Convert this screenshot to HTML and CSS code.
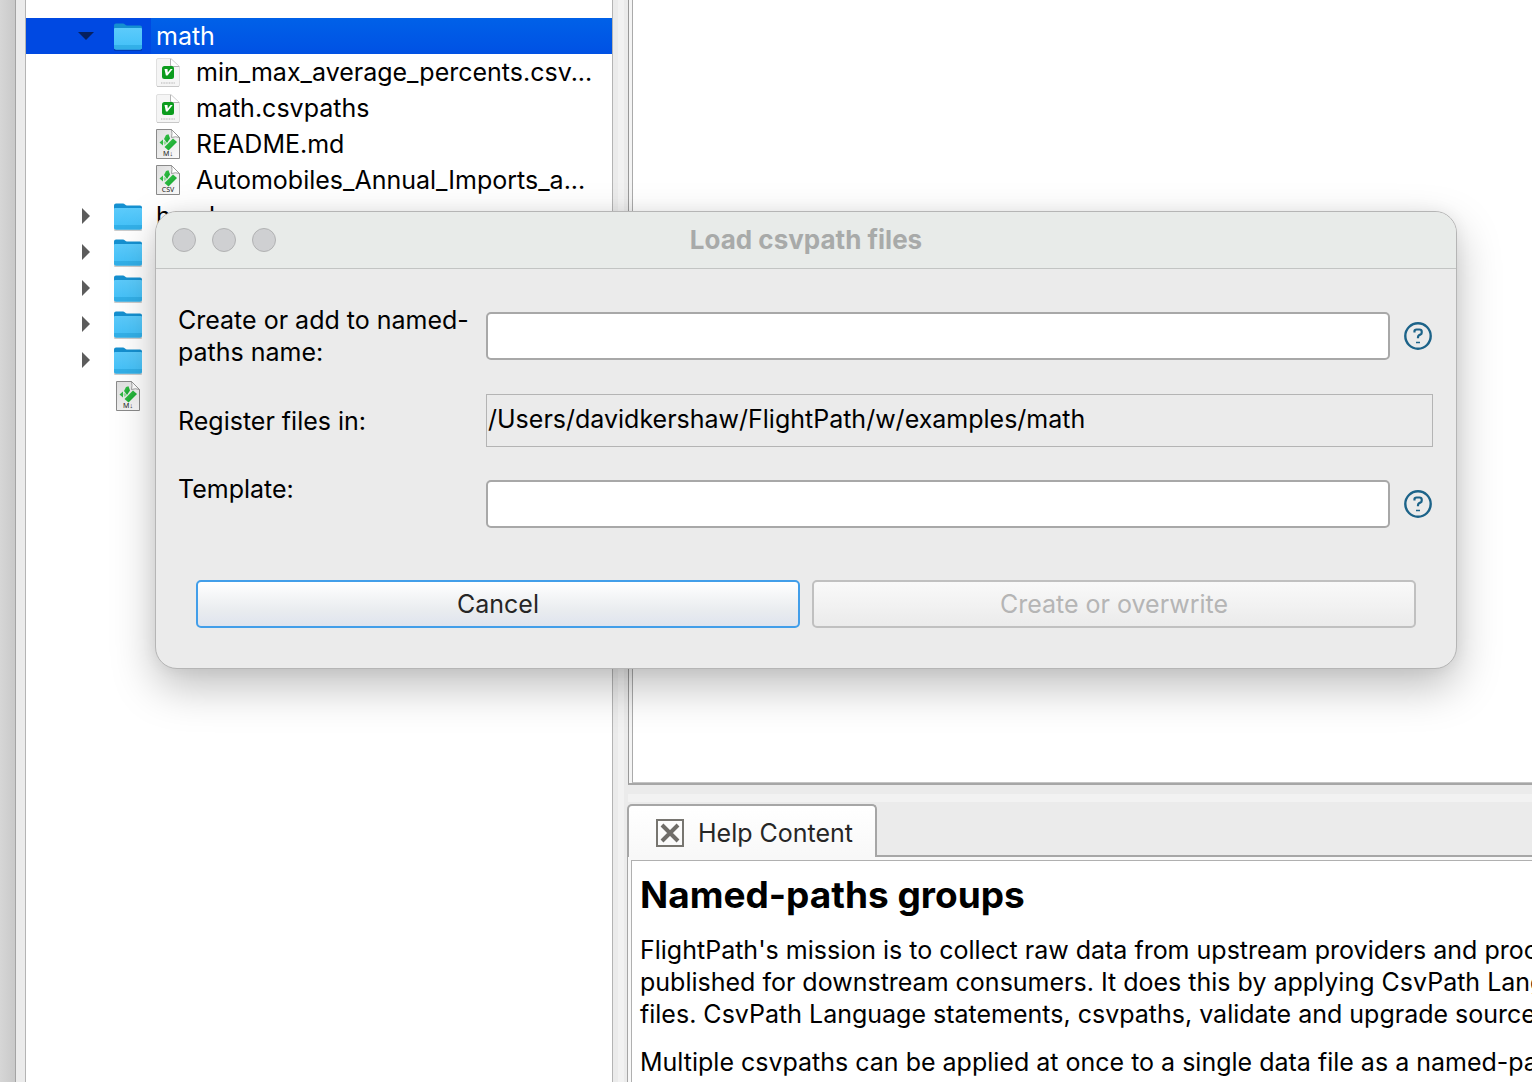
FILE: index.html
```html
<!DOCTYPE html>
<html lang="en">
<head>
  <meta charset="UTF-8">
  <meta name="viewport" content="width=device-width, initial-scale=1.0">
  <title>FlightPath</title>
  <link rel="stylesheet" href="styles.css">
</head>
<body>

  <svg class="sprite" aria-hidden="true">
    <defs>
      <linearGradient id="folder-front" x1="0" y1="0" x2="0" y2="1">
        <stop offset="0" stop-color="#5ccbfb"/>
        <stop offset="1" stop-color="#41c0f8"/>
      </linearGradient>
      <linearGradient id="page" x1="0" y1="0" x2="1" y2="1">
        <stop offset="0" stop-color="#dedede"/>
        <stop offset="1" stop-color="#fbfbfb"/>
      </linearGradient>
      <linearGradient id="leaf" x1="0" y1="0" x2="1" y2="1">
        <stop offset="0" stop-color="#3cc44c"/>
        <stop offset="1" stop-color="#0fa32a"/>
      </linearGradient>
    </defs>
    <symbol id="folder" viewBox="0 0 32 32">
      <rect x="2" y="28" width="28" height="3" rx="1" fill="#000" opacity=".2"/>
      <path d="M2 5.500q0-2 2-2h7q1 0 2 1t2 1h13q2 0 2 2v6H2z" fill="#1590d0"/>
      <path d="M2 9q0-1 1-1h26q1 0 1 1v18.500q0 2-2 2H4q-2 0-2-2z" fill="url(#folder-front)"/>
      <path d="M2 26h28" stroke="#219fd8"/>
      <path d="M2 27v.5q0 2 2 2h24q2 0 2-2V27z" fill="#32afe8"/>
    </symbol>
    <symbol id="vim-file" viewBox="0 0 32 32">
      <path d="M6 2.500h13l8.500 8V29q0 1.500-1.500 1.500H6Q4.500 30.500 4.500 29V4Q4.500 2.500 6 2.500z" fill="#f5f5f5" stroke="#e0e0e0"/>
      <path d="M18.500 2.500l9 8h-7.500q-1.500 0-1.500-1.500z" fill="#fff" stroke="#d0d0d0" stroke-width=".7"/>
      <path d="M18.500 3v6q0 1.500 1.500 1.500h7" fill="none" stroke="#b4b4b4"/>
      <path d="M5 30.500h22" stroke="#c8c8c8"/>
      <rect x="10" y="10" width="12" height="13" rx="2.500" fill="#0b9c1d"/>
      <path d="M12.500 13h3l.3 3.500 2.700-3.500h2.200l-5.200 6.500h-1.600z" fill="#fff"/>
      <path d="M9 27h14" stroke="#c8c8c8" stroke-width="1.500" stroke-dasharray="1 .6"/>
    </symbol>
    <symbol id="doc" viewBox="0 0 32 32">
      <path d="M4.500 1.500h15l8 8v21h-23z" fill="url(#page)" stroke="#8a8a8a"/>
      <path d="M19.500 1.500q1 4 0 8 4-1.500 8 0z" fill="#fff" stroke="#8a8a8a" stroke-width=".8"/>
      <path d="M12 11l2-4 2.500-.8L18 10.500l-3 4.500z" fill="url(#leaf)"/>
      <path d="M7.500 14.500l3.500-3v6z" fill="#2fb944"/>
      <path d="M11.500 14l1.500-1 1.500 2.500-2 1.500z" fill="#8fdd98"/>
      <path d="M21 10.500l4 3.500-8.500 8.500-4-3.500z" fill="url(#leaf)"/>
    </symbol>
    <symbol id="md-file" viewBox="0 0 32 32">
      <use href="#doc"/>
      <text class="doc-type" x="16" y="28" text-anchor="middle">M↓</text>
    </symbol>
    <symbol id="csv-file" viewBox="0 0 32 32">
      <use href="#doc"/>
      <text class="doc-type" x="16" y="28" text-anchor="middle">CSV</text>
    </symbol>
    <symbol id="help" viewBox="0 0 28 28">
      <circle cx="14" cy="14" r="12.700" fill="none" stroke="#1c6389" stroke-width="2.400"/>
      <path d="M10.500 10.500V9q0-1.500 2-1.500h3q2.200 0 2.200 2v1.200q0 1.200-1.200 1.800l-1.500.8q-1 .6-1 2v1" fill="none" stroke="#1c6389" stroke-width="2.200"/>
      <path d="M12 20.500h4" stroke="#1c6389" stroke-width="1.500"/>
    </symbol>
  </svg>

  <div class="window">
    <nav class="tree-panel">
      <ul class="tree">
        <li class="row level-1 selected"><span class="arrow open"></span><svg class="icon"><use href="#folder"/></svg><span class="name">math</span></li>
        <li class="row level-2"><svg class="icon"><use href="#vim-file"/></svg><span class="name">min_max_average_percents.csv...</span></li>
        <li class="row level-2"><svg class="icon"><use href="#vim-file"/></svg><span class="name">math.csvpaths</span></li>
        <li class="row level-2"><svg class="icon"><use href="#md-file"/></svg><span class="name">README.md</span></li>
        <li class="row level-2"><svg class="icon"><use href="#csv-file"/></svg><span class="name">Automobiles_Annual_Imports_a...</span></li>
        <li class="row level-1"><span class="arrow"></span><svg class="icon"><use href="#folder"/></svg><span class="name">headers</span></li>
        <li class="row level-1"><span class="arrow"></span><svg class="icon"><use href="#folder"/></svg></li>
        <li class="row level-1"><span class="arrow"></span><svg class="icon"><use href="#folder"/></svg></li>
        <li class="row level-1"><span class="arrow"></span><svg class="icon"><use href="#folder"/></svg></li>
        <li class="row level-1"><span class="arrow"></span><svg class="icon"><use href="#folder"/></svg></li>
        <li class="row level-1"><span class="arrow none"></span><svg class="icon"><use href="#md-file"/></svg></li>
      </ul>
    </nav>

    <div class="splitter"></div>

    <main class="main">
      <div class="editor"><div class="editor-inner"></div></div>
      <div class="splitter-h"></div>
      <section class="help-panel">
        <div class="tabs">
          <div class="tab">
            <button class="tab-close" aria-label="Close tab">
              <svg viewBox="0 0 28 28">
                <rect x="1" y="1" width="26" height="26" fill="none" stroke="#777570" stroke-width="2"/>
                <path d="M6 6l16 16M22 6L6 22" stroke="#6f6d69" stroke-width="4"/>
              </svg>
            </button>
            <span>Help Content</span>
          </div>
        </div>
        <div class="help-frame">
          <article class="help-content">
            <h1>Named-paths groups</h1>
            <p>FlightPath's mission is to collect raw data from upstream providers and process<br>
              published for downstream consumers. It does this by applying CsvPath Language<br>
              files. CsvPath Language statements, csvpaths, validate and upgrade source</p>
            <p>Multiple csvpaths can be applied at once to a single data file as a named-paths</p>
          </article>
        </div>
      </section>
    </main>
  </div>

  <div class="dialog" role="dialog" aria-labelledby="dialog-title">
    <header class="titlebar">
      <div class="lights"><span></span><span></span><span></span></div>
      <h2 id="dialog-title">Load csvpath files</h2>
    </header>
    <form class="form">
      <div class="field">
        <label for="paths-name">Create or add to named-paths name:</label>
        <input class="text" type="text" id="paths-name">
        <button type="button" class="help" aria-label="Help on name"><svg><use href="#help"/></svg></button>
      </div>
      <div class="field">
        <label for="register">Register files in:</label>
        <input class="path" type="text" id="register" value="/Users/davidkershaw/FlightPath/w/examples/math" readonly>
      </div>
      <div class="field last">
        <label for="template">Template:</label>
        <input class="text" type="text" id="template">
        <button type="button" class="help" aria-label="Help on template"><svg><use href="#help"/></svg></button>
      </div>
      <div class="actions">
        <button type="button" class="btn default">Cancel</button>
        <button type="button" class="btn" disabled>Create or overwrite</button>
      </div>
    </form>
  </div>

</body>
</html>
```
FILE: styles.css
```css
* {
  box-sizing: border-box;
}

body {
  margin: 0;
  height: 100vh;
  overflow: hidden;
  background: #ebebeb;
  color: #000;
  font-family: Inter, "Liberation Sans", sans-serif;
  font-size: 25px;
  line-height: 32px;
}

button, input {
  font: inherit;
  color: inherit;
}

.sprite {
  position: absolute;
  width: 0;
  height: 0;
}

.doc-type {
  font-family: "Noto Sans", sans-serif;
  font-size: 7px;
  fill: #222;
}

.window {
  display: flex;
  height: 100%;
  padding-left: 25px;
  background: linear-gradient(to right, #d6d6d6, #c9c9c9 15px, #a4a4a4 15px, #a4a4a4 16px, #ebebeb 16px);
}

/* file tree */
.tree-panel {
  flex: 0 0 588px;
  background: #fff;
  border: solid #b4b4b4;
  border-width: 0 1px;
}

.tree {
  margin: 0;
  padding: 18px 0 0;
  list-style: none;
}

.row {
  display: flex;
  align-items: center;
  height: 36px;
  white-space: nowrap;
}

.level-1 {
  padding-left: 52px;
}

.level-2 {
  padding-left: 126px;
}

.row .icon {
  width: 32px;
  height: 32px;
  margin-right: 12px;
}

.selected {
  color: #fff;
  background: linear-gradient(to right, #0049e2 125px, transparent 125px), linear-gradient(#0061e8, #0051e4);
}

.arrow {
  width: 34px;
}

.arrow::before {
  content: "";
  display: block;
  width: 8px;
  height: 16px;
  margin-left: 4px;
  background: #5c5c5c;
  clip-path: polygon(0 0, 100% 50%, 0 100%);
}

.arrow.open::before {
  width: 16px;
  height: 8px;
  margin-left: 0;
  background: #06205f;
  clip-path: polygon(0 0, 100% 0, 50% 100%);
}

.arrow.none::before {
  display: none;
}

.splitter {
  flex: 0 0 14px;
  background: linear-gradient(to right, #ebebeb 5px, #f2f2f2 5px, #f2f2f2 11px, #ebebeb 11px);
}

/* right side */
.main {
  flex: 1;
  min-width: 0;
  display: flex;
  flex-direction: column;
}

.editor {
  flex: 1;
  display: flex;
  margin-left: 1px;
  padding-left: 3px;
  background: #f4f4f4;
  border-left: 1px solid #999;
  border-bottom: 2px solid #a6a6a6;
}

.editor-inner {
  flex: 1;
  background: #fff;
  border-left: 1px solid #aaa;
  border-bottom: 1px solid #c4c4c4;
}

.splitter-h {
  height: 19px;
  margin-left: 1px;
  background: linear-gradient(#ebebeb 9px, #f2f2f2 9px, #f2f2f2 17px, #ebebeb 17px);
}

.help-panel {
  flex: 0 0 278px;
  min-height: 0;
  height: 278px;
  display: flex;
  flex-direction: column;
}

.tabs {
  display: flex;
  border-bottom: 2px solid #a6a6a6;
}

.tab {
  display: flex;
  align-items: center;
  gap: 14px;
  height: 53px;
  margin-bottom: -2px;
  padding: 2px 22px 0 27px;
  color: #262626;
  background: linear-gradient(#fff, #f8f8f8);
  border: 2px solid #a6a6a6;
  border-bottom: 0;
  border-radius: 5px 5px 0 0;
}

.tab-close {
  display: block;
  width: 28px;
  height: 28px;
  padding: 0;
  border: 0;
  background: none;
}

.tab-close svg {
  display: block;
}

.help-frame {
  flex: 1;
  min-height: 0;
  padding: 3px 0 0 3px;
  background: #f8f8f8;
  border-left: 1px solid #a6a6a6;
  overflow: hidden;
}

.help-content {
  height: 100%;
  padding: 10px 0 0 8px;
  background: #fff;
  border: solid #b0b0b0;
  border-width: 1px 0 0 1px;
  white-space: nowrap;
}

.help-content h1 {
  margin: 0 0 15px;
  font-size: 37px;
  line-height: 48px;
}

.help-content p {
  margin: 0 0 16px;
}

/* dialog */
.dialog {
  position: absolute;
  top: 211px;
  left: 155px;
  right: 75px;
  background: #ebebeb;
  border: 1px solid #b5b5b5;
  border-radius: 22px;
  box-shadow: 0 18px 44px rgba(0, 0, 0, 0.25), 0 0 16px rgba(0, 0, 0, 0.06);
}

.titlebar {
  display: grid;
  grid-template-columns: 1fr auto 1fr;
  align-items: center;
  height: 57px;
  padding: 0 16px;
  background: #e8ebe9;
  border-bottom: 1px solid #c2c4c3;
  border-radius: 21px 21px 0 0;
}

.titlebar h2 {
  margin: 0;
  font-size: 26px;
  color: #a8aaa9;
}

.lights {
  display: flex;
  gap: 16px;
}

.lights span {
  width: 24px;
  height: 24px;
  background: #cfd0d2;
  border: 1px solid #b1b2b3;
  border-radius: 50%;
}

.form {
  display: flex;
  flex-direction: column;
  gap: 26px;
  padding: 35px 23px 40px 22px;
}

.field {
  display: flex;
  align-items: center;
}

.field label {
  flex: 0 0 308px;
}

.text, .path {
  flex: 1;
  min-width: 0;
}

.text {
  height: 48px;
  padding: 0 8px;
  background: #fff;
  border: 2px solid #a8a8a8;
  border-radius: 5px;
}

.path {
  height: 53px;
  padding: 0 1px 4px;
  background: #ebebeb;
  border: 1px solid #b4b4b4;
}

.help {
  width: 28px;
  height: 28px;
  margin: 0 1px 0 14px;
  padding: 0;
  border: 0;
  background: none;
}

.help svg {
  display: block;
  width: 28px;
  height: 28px;
}

.last {
  align-items: flex-end;
  height: 55px;
}

.last label {
  align-self: flex-start;
}

.last .help {
  margin-bottom: 10px;
}

.actions {
  display: flex;
  gap: 12px;
  margin-top: 26px;
  padding: 0 17px 0 18px;
}

.btn {
  flex: 1;
  height: 48px;
  color: #b5b5b5;
  background: linear-gradient(#f9f9f9, #ebebeb);
  border: 2px solid #c0c0c0;
  border-radius: 5px;
}

.btn.default {
  color: #262626;
  background: linear-gradient(#fff, #e9ecef 65%, #dfe4ee);
  border-color: #429ee9;
}
```
